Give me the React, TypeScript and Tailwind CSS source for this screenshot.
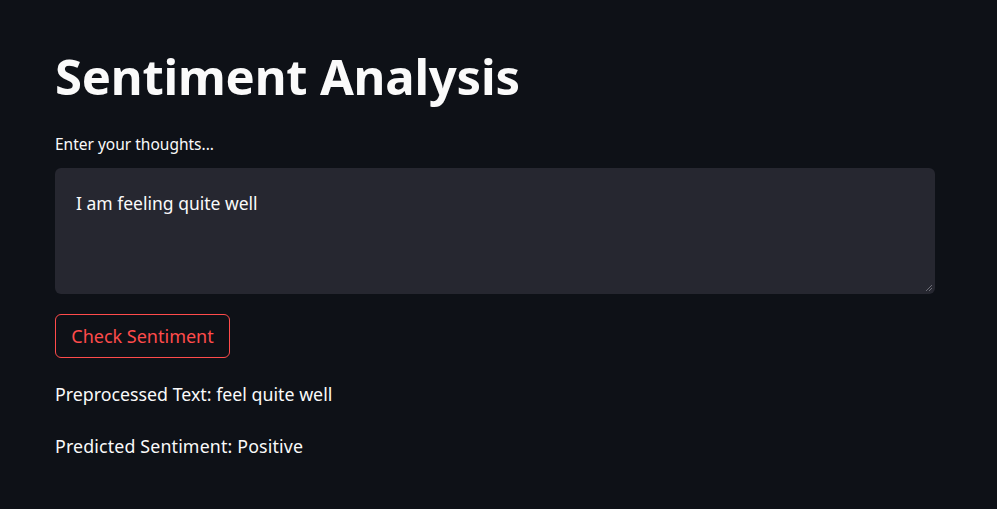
export default function App() {
  return (
    <div className="min-h-[509px] w-full bg-[#0e1117] text-[#fafafa] font-['Noto_Sans',sans-serif]">
      <div className="ml-[55px] w-[880px] pt-[44px] flex flex-col">
        {/* title */}
        <h1 className="text-[49px] leading-[64px] font-bold tracking-[-0.2px]">Sentiment Analysis</h1>

        {/* input */}
        <label className="mt-[26px] text-[15.5px] leading-[20px]">Enter your thoughts...</label>
        <div className="mt-[14px] h-[126px] rounded-[6px] bg-[#262730] px-[21px] pt-[23px] relative">
          <p className="text-[17.5px] leading-[24px]">I am feeling quite well</p>
          <svg className="absolute right-[2px] bottom-[2px]" width="8" height="8" viewBox="0 0 8 8">
            <path d="M7 1L1 7M7 4L4 7" stroke="#6b6c75" strokeWidth="1" />
          </svg>
        </div>

        {/* button */}
        <button className="mt-[20px] self-start h-[44px] w-[175px] rounded-[6px] border border-[#ff4b4b] text-[#ff4b4b] text-[18px]">
          Check Sentiment
        </button>

        {/* results */}
        <p className="mt-[24px] text-[17.8px] leading-[24px]">Preprocessed Text: feel quite well</p>
        <p className="mt-[28px] text-[17.8px] leading-[24px] tracking-[0.15px]">Predicted Sentiment: Positive</p>
      </div>
    </div>
  )
}
